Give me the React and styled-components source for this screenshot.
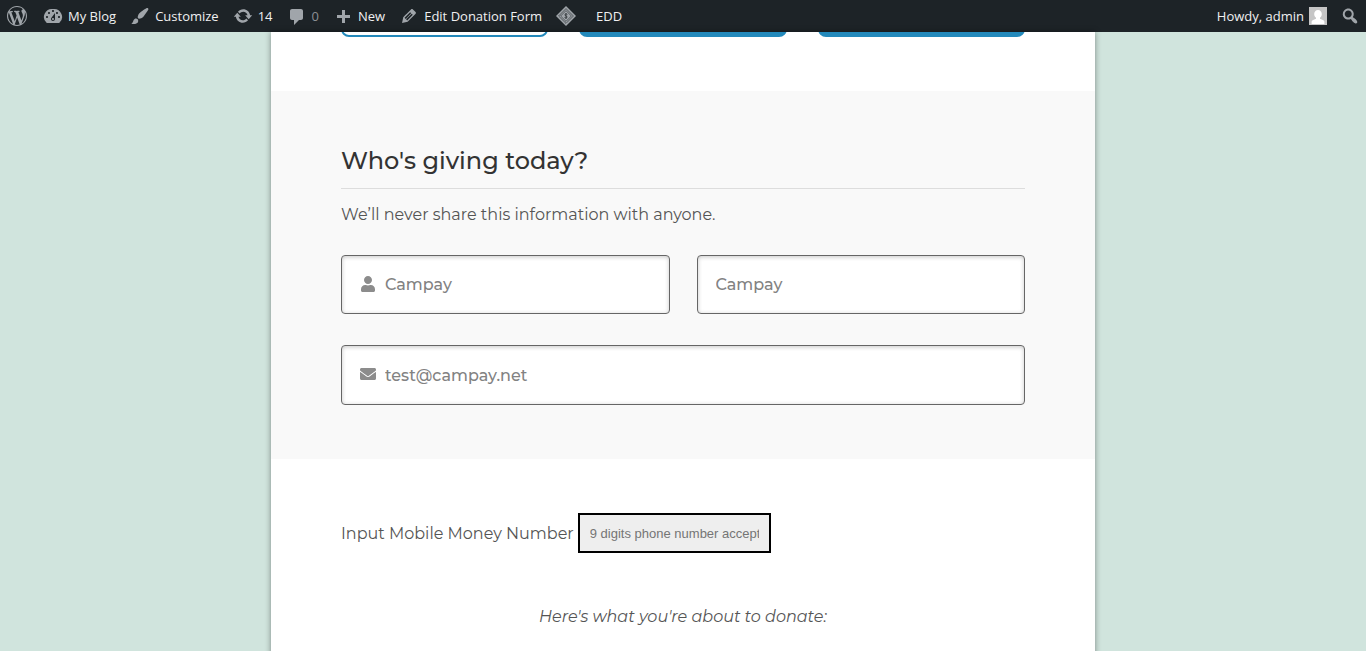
import React from 'react'
import styled, { createGlobalStyle } from 'styled-components'
import { FaUser, FaEnvelope } from 'react-icons/fa'

const barColor = "#1d2327";
const barIcon = "#a0a5aa";
const blue = "#2389bb";

const uiFont = `"Open Sans", "Noto Sans", sans-serif`;
const formFont = `Montserrat, Inter, sans-serif`;

const GlobalStyle = createGlobalStyle`
    * {
        box-sizing: border-box;
    }

    body {
        margin: 0;
        background: #d0e4dd;
        font-family: ${formFont};
    }
`

const Page = styled.div`
    display: flex;
    flex-direction: column;
    height: 100vh;
    overflow: hidden;
`

// Admin bar
const AdminBar = styled.nav`
    display: flex;
    flex: none;
    justify-content: space-between;
    height: 32px;
    background: ${barColor};
    font-family: ${uiFont};
    font-size: 13px;
`

const BarGroup = styled.div`
    display: flex;
`

const BarLink = styled.a`
    display: flex;
    align-items: center;
    gap: ${props => props.$gap || 5}px;
    padding: 0 7px;
    color: ${props => props.$muted ? "#8c8f94" : "#f0f0f1"};
    text-decoration: none;
    white-space: nowrap;

    &:hover {
        color: #72aee6;
    }
`

const LogoLink = styled(BarLink)`
    padding: 0 9px 0 7px;
`

const SearchLink = styled(BarLink)`
    padding: 0 6px;
`

const BarSvg = styled.svg`
    flex: none;
    width: 20px;
    height: 20px;
    fill: ${barIcon};
    fill-rule: evenodd;
`

const Avatar = styled.svg`
    width: 18px;
    height: 18px;
`

const icons = {
    wordpress: "M20 10c0-5.51-4.49-10-10-10C4.48 0 0 4.49 0 10c0 5.52 4.48 10 10 10 5.51 0 10-4.48 10-10zM7.78 15.37L4.37 6.22c.55-.02 1.17-.08 1.17-.08.5-.06.44-1.13-.06-1.11 0 0-1.45.11-2.37.11-.18 0-.37 0-.58-.01C4.12 2.69 6.87 1.11 10 1.11c2.33 0 4.45.87 6.05 2.34-.68-.11-1.65.39-1.65 1.58 0 .74.45 1.36.9 2.1.35.61.55 1.36.55 2.46 0 1.49-1.4 5-1.4 5l-3.03-8.37c.54-.02.82-.17.82-.17.5-.05.44-1.25-.06-1.22 0 0-1.44.12-2.38.12-.87 0-2.33-.12-2.33-.12-.5-.03-.56 1.2-.06 1.22l.92.08 1.26 3.41zM17.41 10c.24-.64.74-1.87.43-4.25.7 1.29 1.05 2.71 1.05 4.25 0 3.29-1.73 6.24-4.4 7.78.97-2.59 1.94-5.2 2.92-7.78zM6.1 18.09C3.12 16.65 1.11 13.53 1.11 10c0-1.3.23-2.48.72-3.59C3.25 10.3 4.67 14.2 6.1 18.09zm4.03-6.63l2.58 6.98c-.86.29-1.76.45-2.71.45-.79 0-1.57-.11-2.29-.33.81-2.38 1.62-4.74 2.42-7.1z",
    dashboard: "M3.76 17h12.48A7.998 7.998 0 0 0 10 3a7.998 7.998 0 0 0-6.24 14zM10 4c.55 0 1 .45 1 1s-.45 1-1 1-1-.45-1-1 .45-1 1-1zM6 6c.55 0 1 .45 1 1s-.45 1-1 1-1-.45-1-1 .45-1 1-1zm8 0c.55 0 1 .45 1 1s-.45 1-1 1-1-.45-1-1 .45-1 1-1zm-5.37 5.55L12 7v6c0 1.1-.9 2-2 2s-2-.9-2-2c0-.57.24-1.08.63-1.45zM4 10c.55 0 1 .45 1 1s-.45 1-1 1-1-.45-1-1 .45-1 1-1zm12 0c.55 0 1 .45 1 1s-.45 1-1 1-1-.45-1-1 .45-1 1-1zm-5 3c0-.55-.45-1-1-1s-1 .45-1 1 .45 1 1 1 1-.45 1-1z",
    brush: "M18.33 3.57s.27-.8-.31-1.36c-.53-.52-1.22-.24-1.22-.24-.61.3-5.76 3.47-7.67 5.57-.86.96-2.06 3.79-1.09 4.82.92.98 3.96-.17 4.79-1 2.06-2.06 5.21-7.17 5.5-7.79zM1.4 17.65c2.37-1.56 1.46-3.41 3.23-4.64.93-.65 2.22-.62 3.08.29.63.67.8 2.57-.16 3.46-1.57 1.45-4 1.55-6.15.89z",
    update: "M10.2 3.28c3.53 0 6.43 2.61 6.92 6h2.08l-3.5 4-3.5-4h2.32c-.45-1.97-2.21-3.45-4.32-3.45-1.45 0-2.73.71-3.54 1.78L4.95 5.66C6.23 4.2 8.11 3.28 10.2 3.28zm-.4 13.44c-3.52 0-6.43-2.61-6.92-6H.8l3.5-4c1.17 1.33 2.33 2.67 3.5 4H5.48c.45 1.97 2.21 3.45 4.32 3.45 1.45 0 2.73-.71 3.54-1.78l1.71 1.95c-1.28 1.46-3.15 2.38-5.25 2.38z",
    comment: "M5 3h9c1.1 0 2 .9 2 2v7c0 1.1-.9 2-2 2h-2l-5 5v-5H5c-1.1 0-2-.9-2-2V5c0-1.1.9-2 2-2z",
    plus: "M17 9v3h-5v5H9v-5H4V9h5V4h3v5h5z",
    pencil: "M13.89 3.39l2.71 2.72c.46.46.42 1.24.03 1.64l-8.01 8.02-5.56 1.16 1.16-5.58s7.6-7.63 7.99-8.03c.39-.39 1.22-.39 1.68.07zm-2.73 2.79l-5.59 5.61 1.11 1.11 5.54-5.65zm-2.97 8.23l5.58-5.6-1.07-1.08-5.59 5.6z",
    search: "M12.14 4.18c1.87 1.87 2.11 4.75.72 6.89.12.1.22.21.36.31.2.16.47.36.81.59.34.24.56.39.66.47.42.31.73.57.94.78.32.32.6.65.84 1 .25.35.44.69.59 1.04.14.35.21.68.18 1-.02.32-.14.59-.36.81s-.49.34-.81.36c-.31.02-.65-.04-.99-.19-.35-.14-.7-.34-1.04-.59-.35-.24-.68-.52-1-.84-.21-.21-.47-.52-.77-.93-.1-.13-.25-.35-.47-.66-.22-.32-.4-.57-.56-.78-.16-.2-.29-.35-.44-.5-2.07 1.09-4.69.76-6.44-.98-2.14-2.15-2.14-5.64 0-7.78 2.15-2.15 5.63-2.15 7.78 0zm-1.41 6.36c1.36-1.37 1.36-3.58 0-4.95-1.37-1.37-3.59-1.37-4.95 0-1.37 1.37-1.37 3.58 0 4.95 1.36 1.37 3.58 1.37 4.95 0z",
}

function BarIcon({ name }) {
    return (
        <BarSvg viewBox="0 0 20 20" aria-hidden="true">
            <path d={icons[name]} />
        </BarSvg>
    )
}

// Nested diamonds
function DiamondIcon() {
    return (
        <BarSvg viewBox="0 0 20 20" aria-hidden="true">
            <path d="M10 0l10 10-10 10L0 10z" />
            <path d="M10 2.6l7.4 7.4-7.4 7.4L2.6 10z" fill="none" stroke={barColor} strokeWidth=".6" />
            <path d="M10 4.6l5.4 5.4-5.4 5.4L4.6 10z" fill="none" stroke={barColor} strokeWidth=".6" />
            <path d="M11.4 8.4c-1-.8-2.8-.5-2.6.6.2 1.1 2.4.9 2.4 2 0 1.1-1.8 1.2-2.7.5M10 7v6" fill="none" stroke={barColor} strokeWidth=".7" />
        </BarSvg>
    )
}

// Donation form
const Card = styled.main`
    flex: 1;
    width: 100%;
    max-width: 824px;
    margin: 0 auto;
    background: #fff;
    box-shadow: 0 0 6px rgba(0, 0, 0, 0.4);
`

const AmountSection = styled.section`
    display: flex;
    align-items: flex-end;
    gap: 31px;
    height: 59px;
    padding: 0 70px 54px;
    overflow: hidden;
`

const AmountButton = styled.button`
    flex: 1;
    height: 60px;
    border: 2px solid ${blue};
    border-radius: 8px;
    background: ${props => props.$selected ? "#fff" : blue};
    cursor: pointer;
`

const DonorSection = styled.section`
    padding: 54px 70px;
    background: #f9f9f9;
`

const Heading = styled.h2`
    margin: 0;
    padding-bottom: 11px;
    border-bottom: 1px solid #ddd;
    color: #333;
    font-size: 24px;
    font-weight: 500;
    line-height: 32px;
`

const Text = styled.p`
    margin: 14px 0 28px;
    color: #555;
    font-size: 16px;
    font-weight: 400;
    line-height: 24px;
`

const FieldGrid = styled.div`
    display: grid;
    grid-template-columns: 1fr 1fr;
    gap: 31px 27px;
`

const Field = styled.label`
    display: flex;
    align-items: center;
    gap: 9px;
    height: ${props => props.$wide ? 60 : 59}px;
    padding: 0 18px;
    grid-column: ${props => props.$wide ? "1 / -1" : "auto"};
    border: 1px solid #666;
    border-radius: 4px;
    background: #fff;
    box-shadow: inset 0 1px 4px rgba(0, 0, 0, 0.22);
    color: #8c8c8c;

    svg {
        flex: none;
        width: 16px;
        height: 16px;
        margin-bottom: 2px;
    }
`

const FieldInput = styled.input`
    flex: 1;
    min-width: 0;
    padding: 0;
    border: 0;
    outline: 0;
    background: transparent;
    color: #828282;
    font-family: ${formFont};
    font-size: 16px;
    font-weight: 500;
`

const PaymentSection = styled.section`
    padding: 54px 70px;
`

const PhoneRow = styled.div`
    display: flex;
    align-items: center;
    gap: 4px;
    color: #555;
    font-size: 16px;
    font-weight: 400;
`

const PhoneInput = styled.input`
    width: 193px;
    height: 40px;
    padding: 0 10px;
    border: 2px solid #000;
    background: #eee;
    font-family: "Liberation Sans", Arial, sans-serif;
    font-size: 13px;

    &::placeholder {
        color: #757575;
    }
`

const Summary = styled.p`
    margin: 52px 0 0;
    color: #555;
    font-size: 16px;
    font-style: italic;
    line-height: 24px;
    text-align: center;
`

export default function App() {
    return (
        <Page>
            <GlobalStyle />
            <AdminBar>
                <BarGroup>
                    <LogoLink href="#" aria-label="About WordPress"><BarIcon name="wordpress" /></LogoLink>
                    <BarLink href="#"><BarIcon name="dashboard" />My Blog</BarLink>
                    <BarLink href="#"><BarIcon name="brush" />Customize</BarLink>
                    <BarLink href="#"><BarIcon name="update" />14</BarLink>
                    <BarLink href="#" $muted><BarIcon name="comment" />0</BarLink>
                    <BarLink href="#"><BarIcon name="plus" />New</BarLink>
                    <BarLink href="#"><BarIcon name="pencil" />Edit Donation Form</BarLink>
                    <BarLink href="#" $gap={20}><DiamondIcon />EDD</BarLink>
                </BarGroup>
                <BarGroup>
                    <BarLink href="#">
                        Howdy, admin
                        <Avatar viewBox="0 0 18 18" aria-hidden="true">
                            <path d="M0 0h18v18H0z" fill="#c5c5c5" />
                            <path d="M9 3c2.300 0 3.800 1.700 3.800 4 0 1.600-.7 3-1.800 3.800v.9l3.400 1.500c.6.300 1 .9 1 1.600V17H2.600v-2.200c0-.7.400-1.300 1-1.600L7 11.700v-.9C5.900 10 5.200 8.600 5.200 7c0-2.300 1.500-4 3.800-4z" fill="#fff" />
                        </Avatar>
                    </BarLink>
                    <SearchLink href="#" aria-label="Search"><BarIcon name="search" /></SearchLink>
                </BarGroup>
            </AdminBar>

            <Card>
                <AmountSection>
                    <AmountButton type="button" aria-label="First amount" $selected />
                    <AmountButton type="button" aria-label="Second amount" />
                    <AmountButton type="button" aria-label="Third amount" />
                </AmountSection>

                <DonorSection>
                    <Heading>Who's giving today?</Heading>
                    <Text>We’ll never share this information with anyone.</Text>
                    <FieldGrid>
                        <Field>
                            <FaUser />
                            <FieldInput type="text" aria-label="First name" defaultValue="Campay" />
                        </Field>
                        <Field>
                            <FieldInput type="text" aria-label="Last name" defaultValue="Campay" />
                        </Field>
                        <Field $wide>
                            <FaEnvelope />
                            <FieldInput type="email" aria-label="Email address" defaultValue="test@campay.net" />
                        </Field>
                    </FieldGrid>
                </DonorSection>

                <PaymentSection>
                    <PhoneRow>
                        <label htmlFor="phone">Input Mobile Money Number</label>
                        <PhoneInput id="phone" type="tel" placeholder="9 digits phone number accepted" />
                    </PhoneRow>
                    <Summary>Here's what you're about to donate:</Summary>
                </PaymentSection>
            </Card>
        </Page>
    )
}
